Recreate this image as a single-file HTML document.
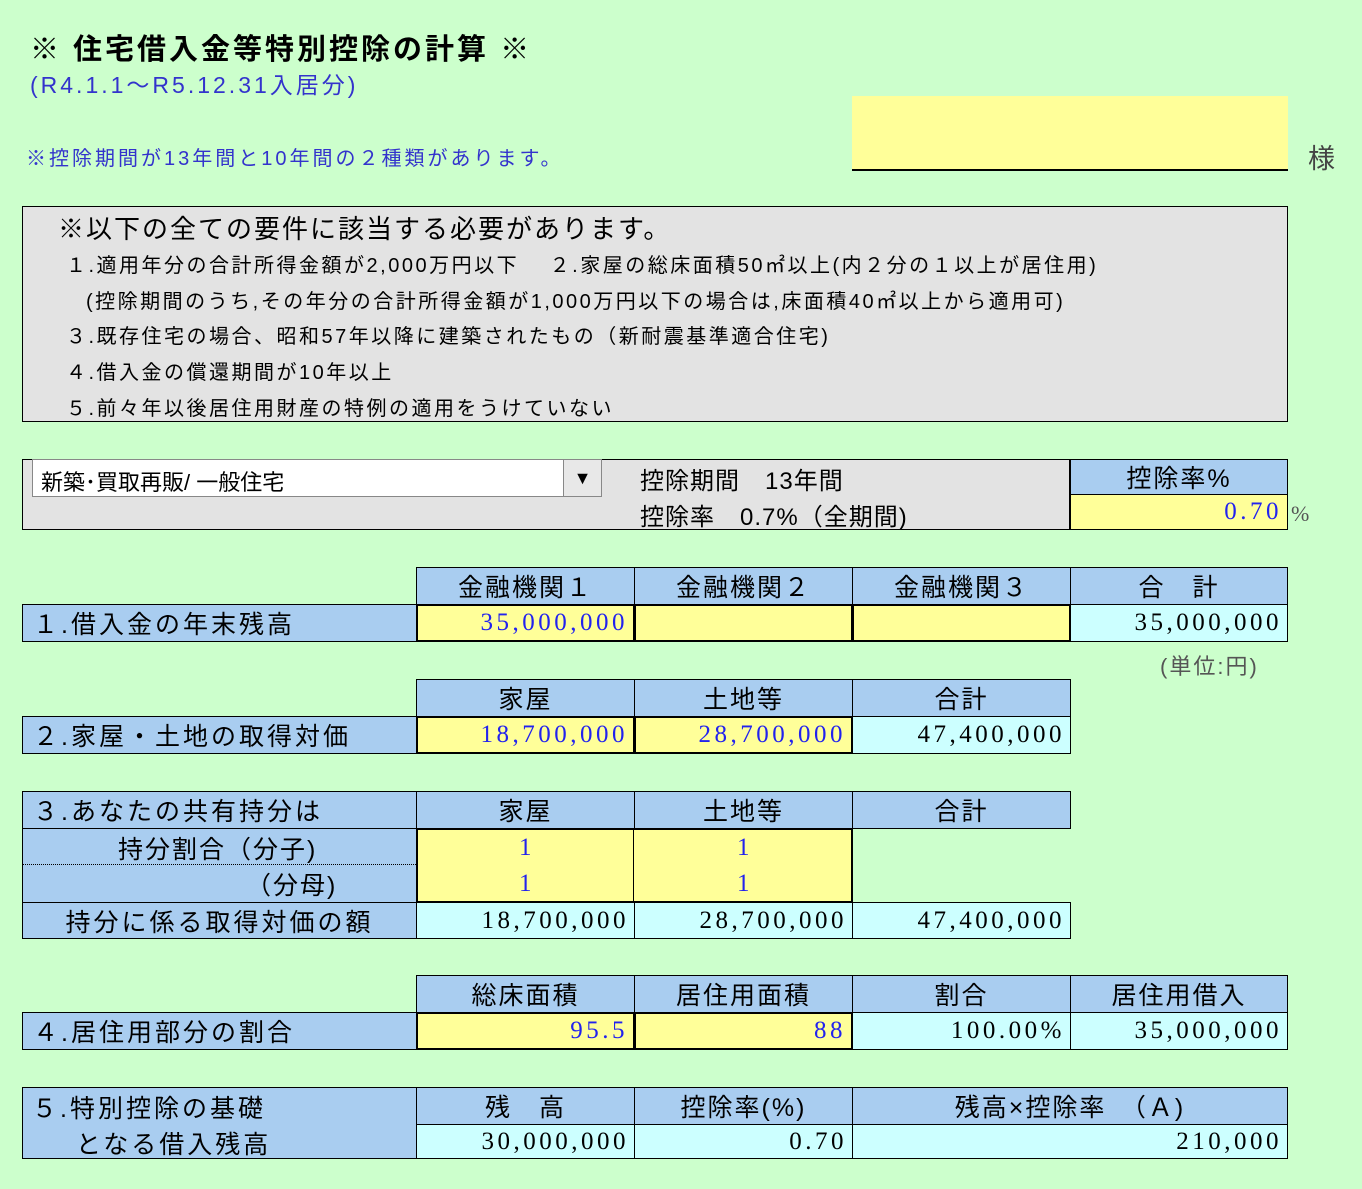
<!DOCTYPE html>
<html><head><meta charset="utf-8"><style>
body{margin:0;width:1362px;height:1189px;background:#ccffcc;position:relative;overflow:hidden;font-family:"Liberation Sans","Noto Sans CJK JP",sans-serif;color:#000}
.a{position:absolute;white-space:nowrap}
.c{position:absolute;box-sizing:border-box;border:1px solid #000;display:flex;align-items:center;justify-content:center;font-size:25px;white-space:nowrap;overflow:hidden;letter-spacing:2px}
.h{background:#a9cdf0}
.y{background:#ffff99}
.k{background:#ccffff}
.n{font-family:"Liberation Serif","Noto Serif CJK SC",serif;justify-content:flex-end;padding-right:5px;letter-spacing:3.5px;font-size:25px}
.b{color:#2222ee}
.l{justify-content:flex-start;padding-left:10px;letter-spacing:3px}
.r{font-size:20px;letter-spacing:2.5px}
</style></head><body>
<div class="a" style="left:30px;top:26px;font-size:29px;font-weight:bold;letter-spacing:3px">※ 住宅借入金等特別控除の計算 ※</div>
<div class="a" style="left:30px;top:66px;font-size:23px;color:#3333cc;letter-spacing:3px">(R4.1.1～R5.12.31入居分)</div>
<div class="a" style="left:26px;top:142px;font-size:20px;color:#3333cc;letter-spacing:3px">※控除期間が13年間と10年間の２種類があります。</div>
<div class="a" style="left:852px;top:96px;width:436px;height:73px;background:#ffff99;border-bottom:2px solid #000"></div>
<div class="a" style="left:1308px;top:137px;font-size:27px;color:#444">様</div>

<div class="a" style="left:22px;top:206px;width:1266px;height:216px;box-sizing:border-box;border:1px solid #000;background:#e3e3e3"></div>
<div class="a" style="left:58px;top:209px;font-size:26px;letter-spacing:2px">※以下の全ての要件に該当する必要があります。</div>
<div class="a r" style="left:66px;top:249px">１.適用年分の合計所得金額が2,000万円以下　 ２.家屋の総床面積50㎡以上(内２分の１以上が居住用)</div>
<div class="a r" style="left:86px;top:285px">(控除期間のうち,その年分の合計所得金額が1,000万円以下の場合は,床面積40㎡以上から適用可)</div>
<div class="a r" style="left:66px;top:320px">３.既存住宅の場合、昭和57年以降に建築されたもの（新耐震基準適合住宅)</div>
<div class="a r" style="left:66px;top:356px">４.借入金の償還期間が10年以上</div>
<div class="a r" style="left:66px;top:392px">５.前々年以後居住用財産の特例の適用をうけていない</div>

<div class="a" style="left:22px;top:459px;width:1048px;height:71px;box-sizing:border-box;border:1px solid #000;background:#e3e3e3"></div>
<div class="a" style="left:32px;top:459px;width:570px;height:38px;background:#fff;border:1px solid #888;box-sizing:border-box;font-size:22px;padding:5px 8px">新築･買取再販/ 一般住宅</div>
<div class="a" style="left:563px;top:460px;width:38px;height:36px;background:#e8e8e8;border-left:1px solid #888;box-sizing:border-box;font-size:18px;text-align:center;line-height:36px">▼</div>
<div class="a" style="left:640px;top:461px;font-size:24px;letter-spacing:1px">控除期間　13年間</div>
<div class="a" style="left:640px;top:497px;font-size:24px;letter-spacing:1px">控除率　0.7%（全期間)</div>
<div class="c h" style="left:1070px;top:459px;width:218px;height:36px">控除率%</div>
<div class="c y n b" style="left:1070px;top:494px;width:218px;height:36px">0.70</div>
<div class="a" style="left:1291px;top:501px;font-size:22px;color:#555;font-family:'Liberation Serif',serif">%</div>

<div class="c h" style="left:416px;top:567px;width:219px;height:38px">金融機関１</div>
<div class="c h" style="left:634px;top:567px;width:219px;height:38px">金融機関２</div>
<div class="c h" style="left:852px;top:567px;width:219px;height:38px">金融機関３</div>
<div class="c h" style="left:1070px;top:567px;width:218px;height:38px">合　計</div>
<div class="c h l" style="left:22px;top:604px;width:395px;height:38px">１.借入金の年末残高</div>
<div class="c y n b" style="left:416px;top:604px;width:219px;height:38px;border-width:2px">35,000,000</div>
<div class="c y" style="left:634px;top:604px;width:219px;height:38px;border-width:2px">&nbsp;</div>
<div class="c y" style="left:852px;top:604px;width:219px;height:38px;border-width:2px">&nbsp;</div>
<div class="c k n" style="left:1070px;top:604px;width:218px;height:38px">35,000,000</div>
<div class="a" style="left:1160px;top:649px;font-size:22px;color:#555;letter-spacing:2px">(単位:円)</div>

<div class="c h" style="left:416px;top:679px;width:219px;height:38px">家屋</div>
<div class="c h" style="left:634px;top:679px;width:219px;height:38px">土地等</div>
<div class="c h" style="left:852px;top:679px;width:219px;height:38px">合計</div>
<div class="c h l" style="left:22px;top:716px;width:395px;height:38px">２.家屋・土地の取得対価</div>
<div class="c y n b" style="left:416px;top:716px;width:219px;height:38px;border-width:2px">18,700,000</div>
<div class="c y n b" style="left:634px;top:716px;width:219px;height:38px;border-width:2px">28,700,000</div>
<div class="c k n" style="left:852px;top:716px;width:219px;height:38px">47,400,000</div>

<div class="c h l" style="left:22px;top:791px;width:395px;height:38px">３.あなたの共有持分は</div>
<div class="c h" style="left:416px;top:791px;width:219px;height:38px">家屋</div>
<div class="c h" style="left:634px;top:791px;width:219px;height:38px">土地等</div>
<div class="c h" style="left:852px;top:791px;width:219px;height:38px">合計</div>
<div class="c h" style="left:22px;top:828px;width:395px;height:75px"></div>
<div class="a" style="left:22px;top:864px;width:830px;border-top:1px dotted #000"></div>
<div class="a" style="left:118px;top:830px;font-size:25px;letter-spacing:2px">持分割合（分子)</div>
<div class="a" style="left:246px;top:866px;font-size:25px;letter-spacing:2px">（分母)</div>
<div class="c y" style="left:416px;top:828px;width:437px;height:75px;border-width:2px"></div>
<div class="a" style="left:633px;top:830px;height:71px;border-left:1px solid #000"></div>
<div class="a" style="left:519px;top:834px;font-size:25px;color:#2222ee;font-family:'Liberation Serif',serif">1</div>
<div class="a" style="left:737px;top:834px;font-size:25px;color:#2222ee;font-family:'Liberation Serif',serif">1</div>
<div class="a" style="left:519px;top:870px;font-size:25px;color:#2222ee;font-family:'Liberation Serif',serif">1</div>
<div class="a" style="left:737px;top:870px;font-size:25px;color:#2222ee;font-family:'Liberation Serif',serif">1</div>
<div class="c h" style="left:22px;top:902px;width:395px;height:37px;letter-spacing:3px">持分に係る取得対価の額</div>
<div class="c k n" style="left:416px;top:902px;width:219px;height:37px">18,700,000</div>
<div class="c k n" style="left:634px;top:902px;width:219px;height:37px">28,700,000</div>
<div class="c k n" style="left:852px;top:902px;width:219px;height:37px">47,400,000</div>

<div class="c h" style="left:416px;top:975px;width:219px;height:38px">総床面積</div>
<div class="c h" style="left:634px;top:975px;width:219px;height:38px">居住用面積</div>
<div class="c h" style="left:852px;top:975px;width:219px;height:38px">割合</div>
<div class="c h" style="left:1070px;top:975px;width:218px;height:38px">居住用借入</div>
<div class="c h l" style="left:22px;top:1012px;width:395px;height:38px">４.居住用部分の割合</div>
<div class="c y n b" style="left:416px;top:1012px;width:219px;height:38px;border-width:2px">95.5</div>
<div class="c y n b" style="left:634px;top:1012px;width:219px;height:38px;border-width:2px">88</div>
<div class="c k n" style="left:852px;top:1012px;width:219px;height:38px">100.00%</div>
<div class="c k n" style="left:1070px;top:1012px;width:218px;height:38px">35,000,000</div>

<div class="c h" style="left:22px;top:1087px;width:395px;height:72px"></div>
<div class="a" style="left:32px;top:1089px;font-size:25px;letter-spacing:3px">５.特別控除の基礎</div>
<div class="a" style="left:76px;top:1125px;font-size:25px;letter-spacing:3px">となる借入残高</div>
<div class="c h" style="left:416px;top:1087px;width:219px;height:38px">残　高</div>
<div class="c h" style="left:634px;top:1087px;width:219px;height:38px">控除率(%)</div>
<div class="c h" style="left:852px;top:1087px;width:436px;height:38px">残高×控除率　（Ａ)</div>
<div class="c k n" style="left:416px;top:1124px;width:219px;height:35px">30,000,000</div>
<div class="c k n" style="left:634px;top:1124px;width:219px;height:35px">0.70</div>
<div class="c k n" style="left:852px;top:1124px;width:436px;height:35px">210,000</div>
</body></html>
